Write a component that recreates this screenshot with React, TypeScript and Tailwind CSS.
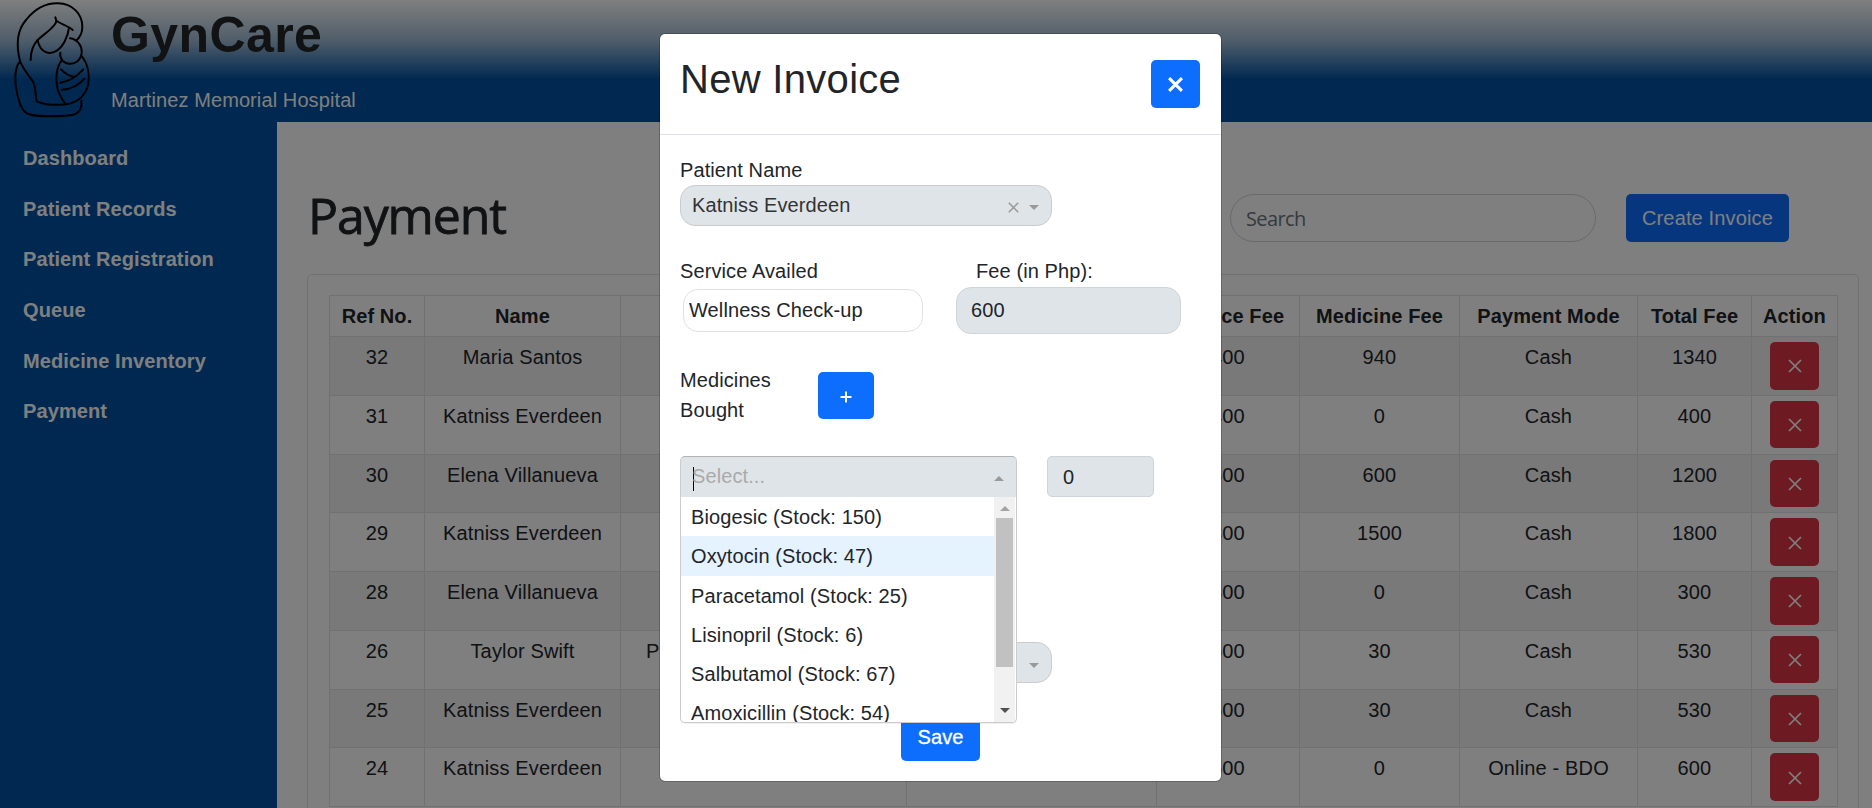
import React from "react";

const NAV = ["Dashboard", "Patient Records", "Patient Registration", "Queue", "Medicine Inventory", "Payment"];

const HEADERS = ["Ref No.", "Name", "", "", "Service Fee", "Medicine Fee", "Payment Mode", "Total Fee", "Action"];

const ROWS = [
  ["32", "Maria Santos", "", "", "400", "940", "Cash", "1340"],
  ["31", "Katniss Everdeen", "", "", "400", "0", "Cash", "400"],
  ["30", "Elena Villanueva", "", "", "600", "600", "Cash", "1200"],
  ["29", "Katniss Everdeen", "", "", "300", "1500", "Cash", "1800"],
  ["28", "Elena Villanueva", "", "", "300", "0", "Cash", "300"],
  ["26", "Taylor Swift", "Post", "", "500", "30", "Cash", "530"],
  ["25", "Katniss Everdeen", "", "", "500", "30", "Cash", "530"],
  ["24", "Katniss Everdeen", "", "", "600", "0", "Online - BDO", "600"],
];

const MEDICINES = [
  "Biogesic (Stock: 150)",
  "Oxytocin (Stock: 47)",
  "Paracetamol (Stock: 25)",
  "Lisinopril (Stock: 6)",
  "Salbutamol (Stock: 67)",
  "Amoxicillin (Stock: 54)",
];

const GRID = "grid grid-cols-[95px_196px_286px_250px_143px_160px_178px_114px_86px]";

function Logo() {
  return (
    <svg width="110" height="122" viewBox="0 0 330 366" fill="none" stroke="#000" strokeWidth="6" strokeLinecap="round" strokeLinejoin="round" className="shrink-0">
      <path d="M60 184C48 135 50 92 78 60C106 25 140 9 174 10C218 11 247 42 247 80C247 98 240 112 228 122" />
      <path d="M166 52C170 62 170 66 163 75C150 92 130 104 113 120C98 136 92 156 92 180" />
      <path d="M170 63C186 74 204 78 218 90" />
      <path d="M207 84C203 112 189 139 172 151C150 166 122 160 113 122" />
      <path d="M210 115C232 118 246 136 245 158C243 181 226 192 209 191C190 190 178 176 181 158" />
      <path d="M60 184C42 206 43 248 52 284C58 310 64 326 76 337C88 348 118 348 148 349C180 349 208 349 226 342C240 336 246 322 244 302" />
      <path d="M60 184C72 212 90 230 100 247C107 262 106 284 110 304C136 316 168 316 198 313C236 308 256 284 264 256C270 226 264 192 245 168" />
      <path d="M185 181C168 204 166 240 172 264C177 284 186 298 195 310" />
      <path d="M183 208C196 222 206 228 224 231" />
      <path d="M250 208C232 228 208 244 181 248" />
      <path d="M254 236C236 256 212 268 186 269" />
    </svg>
  );
}

function Cross({ size, stroke, className = "" }: { size: number; stroke: number; className?: string }) {
  return (
    <svg width={size} height={size} viewBox="0 0 14 14" fill="none" stroke="currentColor" strokeWidth={stroke} className={className}>
      <path d="M1 1L13 13M13 1L1 13" />
    </svg>
  );
}

function Triangle({ up = false, className }: { up?: boolean; className: string }) {
  return (
    <svg width="10" height="5" viewBox="0 0 12 6" fill="currentColor" className={className}>
      <path d={up ? "M0 6L6 0L12 6Z" : "M0 0L6 6L12 0Z"} />
    </svg>
  );
}

function Header() {
  return (
    <header className="flex h-[122px] bg-[linear-gradient(to_bottom,#ffffff_0px,#9ebad4_41px,#0050a0_80px)]">
      <Logo />
      <div className="flex flex-col pl-[1px]">
        <div className="mt-[5px] h-[60px] text-[50px] leading-[60px] font-bold tracking-[0.4px]">GynCare</div>
        <div className="mt-[20px] tracking-[0.1px] text-white">Martinez Memorial Hospital</div>
      </div>
    </header>
  );
}

function Sidebar() {
  return (
    <nav className="flex w-[277px] shrink-0 flex-col bg-[#0050a0] pt-[21px] pl-[23px] font-bold text-white">
      {NAV.map((item) => (
        <a key={item} className="mb-[20.7px] tracking-[0.1px]">{item}</a>
      ))}
    </nav>
  );
}

function PaymentTable() {
  return (
    <div className="ml-[30px] h-[600px] w-[1552px] rounded-[5px] border border-[#dee2e6] pt-[20px] pl-[21px]">
      <div className="w-[1509px] border-t border-l border-[#dee2e6]">
        <div className={GRID + " h-[41px] border-b border-[#dee2e6] text-center font-bold"}>
          {HEADERS.map((h, i) => (
            <div key={i} className="border-r border-[#dee2e6] pt-[5px] whitespace-nowrap tracking-[0.1px]">{h}</div>
          ))}
        </div>
        {ROWS.map((row, i) => (
          <div key={row[0]} className={GRID + " h-[58.75px] border-b border-[#dee2e6] text-center " + (i % 2 === 0 ? "bg-[#f2f2f2]" : "bg-white")}>
            {row.map((cell, c) => (
              <div key={c} className={"overflow-hidden border-r border-[#dee2e6] pt-[5px] whitespace-nowrap " + (c === 2 ? "pl-[25px] text-left" : "")}>{cell}</div>
            ))}
            <div className="flex justify-center border-r border-[#dee2e6] pt-[5px]">
              <button className="flex h-[47.5px] w-[49px] items-center justify-center rounded-[5px] bg-[#dc3545] text-white">
                <Cross size={14} stroke={1.7} className="mt-[1px]" />
              </button>
            </div>
          </div>
        ))}
      </div>
    </div>
  );
}

function MedicineSelect() {
  return (
    <div className="relative z-10 w-[337px]">
      <div className="flex h-[41px] items-center rounded-t-[5px] border border-[#ccc] border-t-[#b3b3b3] border-b-0 bg-[#dfe4e8] pl-[12px]">
        <span className="mt-[3px] h-[24px] w-px bg-black" />
        <span className="-mt-[2px] -ml-[2px] text-[#aaa]">Select...</span>
        <Triangle up className="mt-[3px] mr-[12px] ml-auto text-[#999]" />
      </div>
      <div className="absolute top-[41px] left-0 flex h-[226px] w-[337px] overflow-hidden rounded-b-[5px] border border-t-0 border-[#ccc] bg-white shadow-[0_1px_0_rgba(0,0,0,0.06)]">
        <div className="w-[313px]">
          {MEDICINES.map((m, i) => (
            <div key={m} className={"h-[39.3px] pt-[5px] pl-[10px] whitespace-nowrap " + (i === 1 ? "bg-[#e5f2ff]" : "")}>{m}</div>
          ))}
        </div>
        <div className="flex h-[225px] w-[21px] flex-col items-center bg-[#f1f1f1]">
          <Triangle up className="mt-[9px] text-[#a3a3a3]" />
          <div className="mt-[7px] h-[149px] w-[17px] bg-[#c1c1c1]" />
          <Triangle className="mt-auto mb-[9px] text-[#505050]" />
        </div>
      </div>
    </div>
  );
}

function InvoiceModal() {
  return (
    <div className="flex h-[749px] w-[563px] flex-col rounded-[6px] border border-black/20 bg-white bg-clip-padding tracking-[0.1px]">
      <div className="flex h-[101px] items-start justify-between border-b border-[#dee2e6] pl-[20px] pr-[21px]">
        <h2 className="mt-[20px] text-[40px] leading-[50px] tracking-[0.3px]">New Invoice</h2>
        <button className="mt-[26px] flex h-[48px] w-[49px] items-center justify-center rounded-[5px] bg-[#0d6efd] text-white">
          <Cross size={15} stroke={2.8} />
        </button>
      </div>
      <div className="flex flex-col pl-[20px]">
        <label className="mt-[20px]">Patient Name</label>
        <div className="flex h-[41px] w-[372px] items-center rounded-[15px] border border-[#ccc] bg-[#dfe4e8] pl-[11px] text-[#333]">
          <span className="-mt-[2px]">Katniss Everdeen</span>
          <Cross size={11} stroke={2} className="mt-[3px] ml-auto text-[#999]" />
          <Triangle className="mt-[4px] mr-[12px] ml-[10px] text-[#999]" />
        </div>
        <div className="mt-[30px] flex">
          <div className="w-[276px]">
            <div>Service Availed</div>
            <div className="mt-[3px] ml-[3px] flex h-[43px] w-[240px] items-center rounded-[15px] border border-[#dee2e6] pl-[5px]">
              <span className="-mt-[1px]">Wellness Check-up</span>
            </div>
          </div>
          <div>
            <div className="pl-[20px]">Fee (in Php):</div>
            <div className="mt-[1px] flex h-[47px] w-[225px] items-center rounded-[15px] border border-[#ced4da] bg-[#dfe4e8] pl-[14px]">
              <span className="-mt-[1px]">600</span>
            </div>
          </div>
        </div>
        <div className="mt-[31px] flex">
          <div className="w-[138px]">
            Medicines
            <br />
            Bought
          </div>
          <button className="mt-[7px] flex h-[47px] w-[56px] items-center justify-center rounded-[5px] bg-[#0d6efd] text-white">
            <svg width="12" height="12" viewBox="0 0 12 12" stroke="currentColor" strokeWidth="2" className="mt-[2px]">
              <path d="M6 0.5V11.5M0.5 6H11.5" />
            </svg>
          </button>
        </div>
        <div className="mt-[31px] flex">
          <MedicineSelect />
          <div className="ml-[30px] flex h-[41px] w-[107px] items-center rounded-[5px] border border-[#ced4da] bg-[#dfe4e8] pl-[15px]">0</div>
        </div>
        <div className="mt-[145px] flex h-[41px] w-[372px] items-center rounded-[15px] border border-[#ccc] bg-[#dfe4e8]">
          <Triangle className="mt-[5px] mr-[12px] ml-auto text-[#999]" />
        </div>
        <button className="mt-[30px] ml-[221px] h-[48px] w-[79px] rounded-[5px] bg-[#0d6efd] text-white [-webkit-text-stroke:0.3px_white]">Save</button>
      </div>
    </div>
  );
}

export default function App() {
  return (
    <div className="relative h-[808px] w-[1872px] overflow-hidden bg-white font-['Liberation_Sans',Arial,sans-serif] text-[20px] leading-[30px] tracking-[0.15px] text-[#212529]">
      <Header />
      <div className="flex h-[686px]">
        <Sidebar />
        <main className="flex-1 overflow-hidden">
          <div className="flex h-[152px] pt-[62px]">
            <h1 className="w-[922px] pt-[1px] pl-[31px] font-['Open_Sans','Noto_Sans',sans-serif] text-[50px] leading-[60px] font-medium tracking-[-1.1px] [-webkit-text-stroke:0.8px_#212529]">Payment</h1>
            <div className="mt-[10px] ml-[31px] flex h-[48px] w-[366px] items-center rounded-[24px] border border-[#ced4da] pt-[1px] pl-[15px] font-['Open_Sans','Noto_Sans',sans-serif] tracking-[-0.6px] text-[#6c757d]">
              Search
            </div>
            <button className="mt-[10px] ml-[30px] h-[48px] w-[163px] rounded-[5px] bg-[#0d6efd] text-white">Create Invoice</button>
          </div>
          <PaymentTable />
        </main>
      </div>
      <div className="absolute inset-0 flex items-start justify-center bg-black/50 pt-[33px] pl-[9px]">
        <InvoiceModal />
      </div>
    </div>
  );
}
